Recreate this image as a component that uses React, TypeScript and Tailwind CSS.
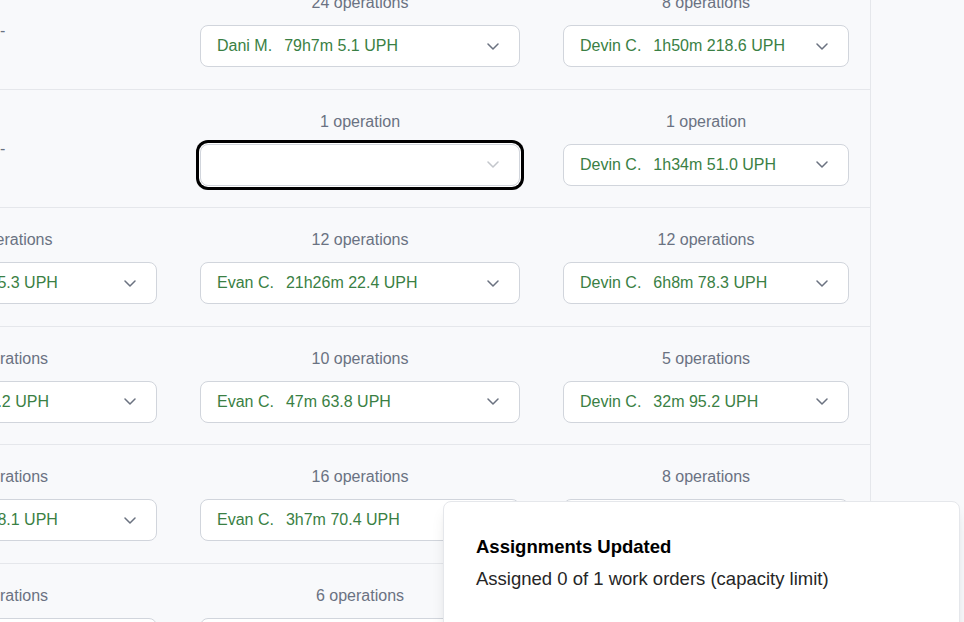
import React from "react";

type Pick = { label: string; name?: string; stat?: string; focused?: boolean };
type Row = { c1: Pick | null; c2: Pick; c3: Pick };

const rows: Row[] = [
  {
    c1: null,
    c2: { label: "24 operations", name: "Dani M.", stat: "79h7m 5.1 UPH" },
    c3: { label: "8 operations", name: "Devin C.", stat: "1h50m 218.6 UPH" },
  },
  {
    c1: null,
    c2: { label: "1 operation", focused: true },
    c3: { label: "1 operation", name: "Devin C.", stat: "1h34m 51.0 UPH" },
  },
  {
    c1: { label: "18 operations", name: "Dani M.", stat: "12h14m 5.3 UPH" },
    c2: { label: "12 operations", name: "Evan C.", stat: "21h26m 22.4 UPH" },
    c3: { label: "12 operations", name: "Devin C.", stat: "6h8m 78.3 UPH" },
  },
  {
    c1: { label: "7 operations", name: "Dani M.", stat: "5h21m 6.2 UPH" },
    c2: { label: "10 operations", name: "Evan C.", stat: "47m 63.8 UPH" },
    c3: { label: "5 operations", name: "Devin C.", stat: "32m 95.2 UPH" },
  },
  {
    c1: { label: "9 operations", name: "Dani M.", stat: "10h52m 8.1 UPH" },
    c2: { label: "16 operations", name: "Evan C.", stat: "3h7m 70.4 UPH" },
    c3: { label: "8 operations", name: "Devin C.", stat: "1h5m 44.0 UPH" },
  },
  {
    c1: { label: "6 operations", name: "Dani M.", stat: "1h2m 9.4 UPH" },
    c2: { label: "6 operations", name: "Evan C.", stat: "1h40m 33.1 UPH" },
    c3: { label: "4 operations", name: "Devin C.", stat: "28m 61.7 UPH" },
  },
];

function Chevron({ faded }: { faded?: boolean }) {
  return (
    <svg
      width="12"
      height="7"
      viewBox="0 0 12 7"
      fill="none"
      className={faded ? "opacity-40" : ""}
    >
      <path d="M1 1l5 5 5-5" stroke="#6b7280" strokeWidth="1.5" strokeLinecap="round" strokeLinejoin="round" />
    </svg>
  );
}

function Cell({ pick }: { pick: Pick }) {
  return (
    <div className="flex flex-col">
      <div className="text-center text-base leading-6 text-gray-500">{pick.label}</div>
      <div
        className={
          "mt-[10px] flex h-[42px] items-center justify-between rounded-lg border border-gray-300 bg-white pl-4 pr-5 " +
          (pick.focused ? "ring-[3px] ring-black ring-offset-1 ring-offset-white" : "")
        }
      >
        <div className="flex whitespace-nowrap text-base text-[#3a7f44]">
          {pick.name && <span className="mr-3">{pick.name}</span>}
          {pick.stat && <span>{pick.stat}</span>}
        </div>
        <Chevron faded={!pick.name} />
      </div>
    </div>
  );
}

export default function App() {
  return (
    <div className="relative h-[622px] w-[964px] overflow-hidden bg-[#f8f9fb] font-['Liberation_Sans',Arial,sans-serif]">
      <div className="flex h-full">
        <div className="w-[871px] shrink-0 overflow-hidden border-r border-gray-200">
          <div className="-mt-[29px]">
            {rows.map((r, i) => (
              <div key={i} className="border-b border-gray-200 pt-[20px] pb-[21.5px]">
                <div className="-ml-[149px] grid grid-cols-[306px_320px_286px] gap-x-[43px]">
                  {r.c1 ? (
                    <Cell pick={r.c1} />
                  ) : (
                    <div className="flex items-center pl-[149px] pt-[3px] text-base text-gray-500">-</div>
                  )}
                  <Cell pick={r.c2} />
                  <Cell pick={r.c3} />
                </div>
              </div>
            ))}
          </div>
        </div>
        <div className="flex-1" />
      </div>

      <div className="absolute left-[443px] top-[501px] w-[517px] rounded-lg border border-gray-200 bg-white p-8 shadow-lg">
        <div className="text-[18.5px] font-bold leading-[26px] text-black">Assignments Updated</div>
        <div className="mt-[6px] text-[18.5px] leading-[26px] text-neutral-800">
          Assigned 0 of 1 work orders (capacity limit)
        </div>
        <div className="h-[40px]" />
      </div>
    </div>
  );
}
